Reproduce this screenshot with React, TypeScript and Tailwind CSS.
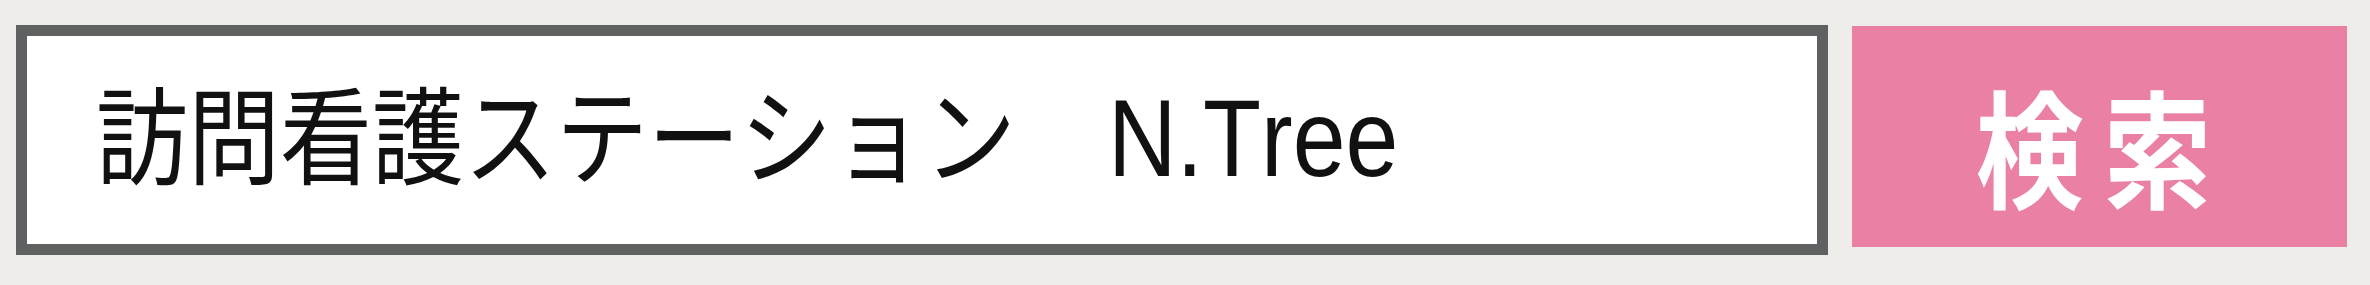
import React from "react";

export default function App() {
  return (
    <div className="w-[2370px] h-[285px] bg-[#eeede9] flex items-start pl-[16px] pt-[25px] gap-[24px]">
      <div className="w-[1812px] h-[230px] border-[11px] border-[#5f6061] bg-white flex items-center pl-[69px]">
        <span
          className="text-[92px] leading-none text-[#111] whitespace-pre inline-block scale-y-[1.15] -translate-y-[2px] [font-kerning:none]"
          style={{ fontFamily: '"Liberation Sans", "Noto Sans CJK JP", sans-serif' }}
        >
          訪問看護ステーション　<span className="text-[95px]">N.Tree</span>
        </span>
      </div>
      <button
        className="w-[495px] h-[221px] mt-[1px] bg-[#ea80a4] text-white flex items-center justify-center"
        style={{ fontFamily: '"Noto Sans CJK JP", sans-serif' }}
      >
        <span className="text-[108px] font-bold leading-none tracking-[20px] pl-[8px] scale-y-[1.18] inline-block translate-y-[7px]">検索</span>
      </button>
    </div>
  );
}
